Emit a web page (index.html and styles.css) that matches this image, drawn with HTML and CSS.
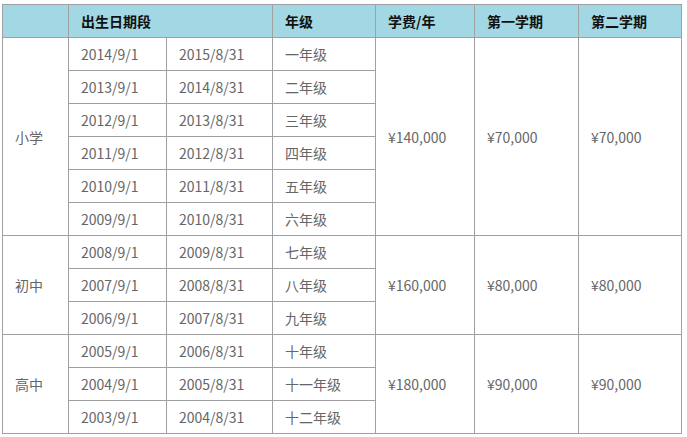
FILE: index.html
```html
<!DOCTYPE html>
<html lang="zh">
<head>
<meta charset="utf-8">
<link rel="stylesheet" href="styles.css">
</head>
<body>
<table class="fees">
  <colgroup>
    <col class="c1"><col class="c2"><col class="c3"><col class="c4"><col class="c5"><col class="c6"><col class="c7">
  </colgroup>
  <thead>
    <tr><th></th><th colspan="2">出生日期段</th><th>年级</th><th>学费/年</th><th>第一学期</th><th>第二学期</th></tr>
  </thead>
  <tbody>
    <tr><td rowspan="6">小学</td><td>2014/9/1</td><td>2015/8/31</td><td>一年级</td><td rowspan="6">¥140,000</td><td rowspan="6">¥70,000</td><td rowspan="6">¥70,000</td></tr>
    <tr><td>2013/9/1</td><td>2014/8/31</td><td>二年级</td></tr>
    <tr><td>2012/9/1</td><td>2013/8/31</td><td>三年级</td></tr>
    <tr><td>2011/9/1</td><td>2012/8/31</td><td>四年级</td></tr>
    <tr><td>2010/9/1</td><td>2011/8/31</td><td>五年级</td></tr>
    <tr><td>2009/9/1</td><td>2010/8/31</td><td>六年级</td></tr>
    <tr><td rowspan="3">初中</td><td>2008/9/1</td><td>2009/8/31</td><td>七年级</td><td rowspan="3">¥160,000</td><td rowspan="3">¥80,000</td><td rowspan="3">¥80,000</td></tr>
    <tr><td>2007/9/1</td><td>2008/8/31</td><td>八年级</td></tr>
    <tr><td>2006/9/1</td><td>2007/8/31</td><td>九年级</td></tr>
    <tr><td rowspan="3">高中</td><td>2005/9/1</td><td>2006/8/31</td><td>十年级</td><td rowspan="3">¥180,000</td><td rowspan="3">¥90,000</td><td rowspan="3">¥90,000</td></tr>
    <tr><td>2004/9/1</td><td>2005/8/31</td><td>十一年级</td></tr>
    <tr><td>2003/9/1</td><td>2004/8/31</td><td>十二年级</td></tr>
  </tbody>
</table>
</body>
</html>
```
FILE: styles.css
```css
html, body { margin: 0; padding: 0; background: #fff; }
body { padding: 4px 2px; }
.fees {
  border-collapse: collapse;
  table-layout: fixed;
  width: 679px;
  font-family: "Noto Sans CJK SC", "Noto Sans", sans-serif;
  font-size: 14px;
  color: #666;
}
.c1 { width: 66px; } .c2 { width: 98px; } .c3 { width: 106px; } .c4 { width: 103px; }
.c5 { width: 99px; } .c6 { width: 104px; } .c7 { width: 103px; }
.fees th, .fees td {
  border: 1px solid #a0a0a0;
  height: 33px;
  padding: 0 12px;
  text-align: left;
  vertical-align: middle;
  line-height: 20px;
  box-sizing: border-box;
  white-space: nowrap;
}
.fees th { background: #a1d8e4; color: #111; font-weight: bold; }
```
